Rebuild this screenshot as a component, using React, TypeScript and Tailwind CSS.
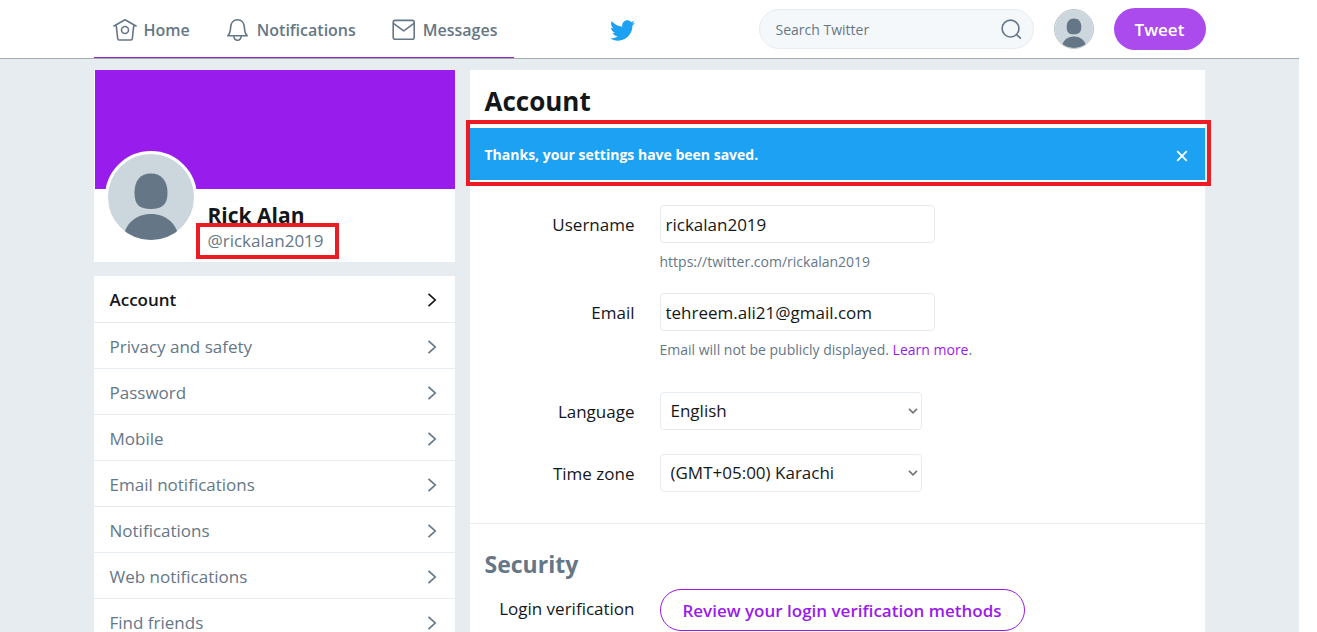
import { useState, type ReactNode } from "react";
import clsx from "clsx";
import { FaTwitter } from "react-icons/fa";

const SETTINGS_LINKS = [
  "Account",
  "Privacy and safety",
  "Password",
  "Mobile",
  "Email notifications",
  "Notifications",
  "Web notifications",
  "Find friends",
];

const FIELD = "h-[38px] rounded border border-[#e6ecf0] bg-white text-[17px] text-[#14171a] outline-none";

function Avatar({ className }: { className?: string }) {
  return (
    <svg viewBox="0 0 86 86" aria-hidden className={clsx("block rounded-full bg-[#ccd6dd]", className)}>
      <path d="M43 19.500c10.500 0 16.500 7.500 16.500 19S55 55 43 55s-16.500-4.500-16.500-16.500S32.500 19.500 43 19.500z" fill="#657786" />
      <path d="M15 86c1-16 13-26 28-26s27 10 28 26z" fill="#657786" />
    </svg>
  );
}

function LineIcon({ children }: { children: ReactNode }) {
  return (
    <svg
      viewBox="0 0 24 24"
      aria-hidden
      className="size-6 shrink-0 fill-none stroke-[#657786] stroke-[1.6]"
      strokeLinecap="round"
      strokeLinejoin="round"
    >
      {children}
    </svg>
  );
}

function NavItem({ label, children }: { label: string; children: ReactNode }) {
  return (
    <a href="#" className="flex items-center gap-[7px] text-base font-[650] text-[#657786]">
      <LineIcon>{children}</LineIcon>
      {label}
    </a>
  );
}

function Header() {
  return (
    <header className="border-b border-[#a6abaf] bg-white">
      <div className="mx-auto flex h-[58px] max-w-[1112px]">
        <nav className="flex w-[420px] shrink-0 items-center justify-between border-b border-[#8a2bc9] pt-[3px] pr-4 pl-[19px]">
          <NavItem label="Home">
            <path d="M1 8 12 1.800 23 8M3.200 7.200l1.500 13.500c.1.900.6 1.300 1.400 1.300h11.800c.8 0 1.300-.4 1.400-1.300l1.500-13.500" />
            <circle cx="12" cy="12" r="3.500" />
          </NavItem>
          <NavItem label="Notifications">
            <path d="M1.800 17.800c2-2 2.600-3.800 2.800-8.400C4.800 4.600 7.600 1.700 11.500 1.700s6.700 2.900 6.900 7.700c.2 4.600.8 6.400 2.800 8.400z" />
            <path d="M7.800 18c.2 2.600 1.600 4.200 3.700 4.200s3.500-1.600 3.700-4.200" />
          </NavItem>
          <NavItem label="Messages">
            <rect x="1.200" y="2.400" width="21" height="18.800" rx="2" />
            <path d="m1.800 5.600 9.100 6.800c.5.400 1.100.4 1.600 0l9.100-6.800" />
          </NavItem>
        </nav>

        <div className="flex flex-1 items-center pt-[3px] pl-24">
          <FaTwitter className="size-[25px] text-[#1da1f2]" />
        </div>

        <div className="flex shrink-0 items-center gap-5">
          <label className="flex h-10 w-[275px] items-center rounded-full border border-[#e6ecf0] bg-[#f5f8fa] pr-[10px] pl-4">
            <input
              type="search"
              aria-label="Search Twitter"
              placeholder="Search Twitter"
              className="min-w-0 flex-1 bg-transparent text-[14px] outline-none placeholder:text-[#657786]"
            />
            <svg viewBox="0 0 24 24" aria-hidden className="size-[23px] fill-none stroke-[#657786] stroke-[1.7]">
              <circle cx="11" cy="11" r="8.800" />
              <path d="m17.300 17.300 4.500 4.200" />
            </svg>
          </label>
          <button type="button" aria-label="Profile" className="rounded-full border border-[#b9c3ca]">
            <Avatar className="size-[38px]" />
          </button>
          <button
            type="button"
            className="h-[42px] w-[92px] rounded-full bg-[#ab4aed] pt-px text-[17px] font-[650] text-white"
          >
            Tweet
          </button>
        </div>
      </div>
    </header>
  );
}

function ProfileCard() {
  return (
    <section className="bg-white pl-px">
      <div className="h-[119px] bg-[#981ceb]" />
      <div className="flex h-[73px] gap-[11px] pl-[10px]">
        <Avatar className="-mt-[38px] box-content size-[86px] shrink-0 border-[3px] border-white" />
        <div className="pt-3">
          <h2 className="text-[21px] leading-7 font-bold text-[#14171a]">Rick Alan</h2>
          <p className="relative text-[17px] leading-6 text-[#657786]">
            @rickalan2019
            <span aria-hidden className="absolute -top-[6px] -right-[15px] -bottom-[6px] -left-3 border-4 border-[#ed1c24]" />
          </p>
        </div>
      </div>
    </section>
  );
}

function SettingsNav() {
  return (
    <nav aria-label="Settings" className="bg-white">
      {SETTINGS_LINKS.map((label, i) => (
        <a
          key={label}
          href="#"
          aria-current={i === 0 ? "page" : undefined}
          className={clsx(
            "flex h-[46px] items-center justify-between border-t border-[#e6ecf0] pt-[2px] pr-[18px] pl-4 text-[17px] first:border-t-0",
            i === 0 ? "font-[650] text-[#14171a]" : "text-[#657786]",
          )}
        >
          {label}
          <svg viewBox="0 0 10 16" aria-hidden className="h-4 w-[10px] fill-none stroke-current stroke-[1.7]">
            <path d="m1.500 1.800 6.700 6.200-6.700 6.200" />
          </svg>
        </a>
      ))}
    </nav>
  );
}

function Row({ id, label, className, children }: { id: string; label: string; className?: string; children: ReactNode }) {
  return (
    <div className={clsx("flex items-start gap-[25px]", className)}>
      <label htmlFor={id} className="w-[165px] shrink-0 pt-px text-right text-[17px] leading-[38px] text-[#14171a]">
        {label}
      </label>
      <div>{children}</div>
    </div>
  );
}

function SelectBox({ id, value }: { id: string; value: string }) {
  return (
    <div className="relative w-[262px]">
      <select id={id} defaultValue={value} className={clsx(FIELD, "block w-full appearance-none pl-[10px]")}>
        <option>{value}</option>
      </select>
      <svg
        viewBox="0 0 10 6"
        aria-hidden
        className="pointer-events-none absolute top-4 right-1 h-[6px] w-[10px] fill-none stroke-[#767676] stroke-[1.7]"
      >
        <path d="m1 .8 4 4 4-4" />
      </svg>
    </div>
  );
}

function SavedAlert({ onClose }: { onClose: () => void }) {
  return (
    <div role="status" className="relative flex h-[52px] items-center justify-between bg-[#1da1f2] pr-4 pl-[15px] text-white">
      <p className="text-[14px] font-bold">Thanks, your settings have been saved.</p>
      <button type="button" aria-label="Dismiss" onClick={onClose} className="px-px pt-1">
        <svg viewBox="0 0 12 12" aria-hidden className="size-3 stroke-current stroke-[1.7]">
          <path d="m1.200 1.200 9.600 9.600m0-9.600-9.600 9.600" />
        </svg>
      </button>
      <span
        aria-hidden
        className="pointer-events-none absolute -top-2 -right-[6px] -bottom-[6px] -left-1 border-4 border-[#ed1c24]"
      />
    </div>
  );
}

function AccountPanel() {
  const [saved, setSaved] = useState(true);

  return (
    <section className="min-w-0 flex-1 bg-white">
      <h1 className="px-[15px] pt-[15px] pb-[11px] text-[26px] leading-8 font-bold text-[#14171a]">Account</h1>
      {saved && <SavedAlert onClose={() => setSaved(false)} />}

      <form className="border-b border-[#e6ecf0] pt-[25px] pb-[30px]">
        <Row id="username" label="Username">
          <input id="username" defaultValue="rickalan2019" className={clsx(FIELD, "block w-[275px] px-[5px]")} />
          <p className="mt-[9px] text-[14px] leading-5 text-[#657786]">https://twitter.com/rickalan2019</p>
        </Row>
        <Row id="email" label="Email" className="mt-[21px]">
          <input id="email" defaultValue="tehreem.ali21@gmail.com" className={clsx(FIELD, "block w-[275px] px-[5px]")} />
          <p className="mt-[9px] text-[14px] leading-5 text-[#657786]">
            Email will not be publicly displayed.{" "}
            <a href="#" className="text-[#981ceb]">
              Learn more
            </a>
            .
          </p>
        </Row>
        <Row id="language" label="Language" className="mt-8">
          <SelectBox id="language" value="English" />
        </Row>
        <Row id="timezone" label="Time zone" className="mt-[23px]">
          <SelectBox id="timezone" value="(GMT+05:00) Karachi" />
        </Row>
      </form>

      <h2 className="px-[15px] pt-6 text-[23px] leading-8 font-bold text-[#657786]">Security</h2>
      <Row id="verification" label="Login verification" className="mt-[9px] pb-6">
        <button
          id="verification"
          type="button"
          className="h-[42px] w-[365px] rounded-full border border-[#981ceb] pt-px text-[17px] font-[650] text-[#981ceb]"
        >
          Review your login verification methods
        </button>
      </Row>
    </section>
  );
}

export default function App() {
  return (
    <div className="min-h-screen bg-white pr-[18px] font-['Open_Sans',sans-serif]">
      <div className="min-h-screen bg-[#e6ecf0]">
        <Header />
        <main className="mx-auto flex max-w-[1112px] items-start gap-[15px] pt-[11px] pr-px">
          <aside className="flex w-[361px] shrink-0 flex-col gap-[14px]">
            <ProfileCard />
            <SettingsNav />
          </aside>
          <AccountPanel />
        </main>
      </div>
    </div>
  );
}
